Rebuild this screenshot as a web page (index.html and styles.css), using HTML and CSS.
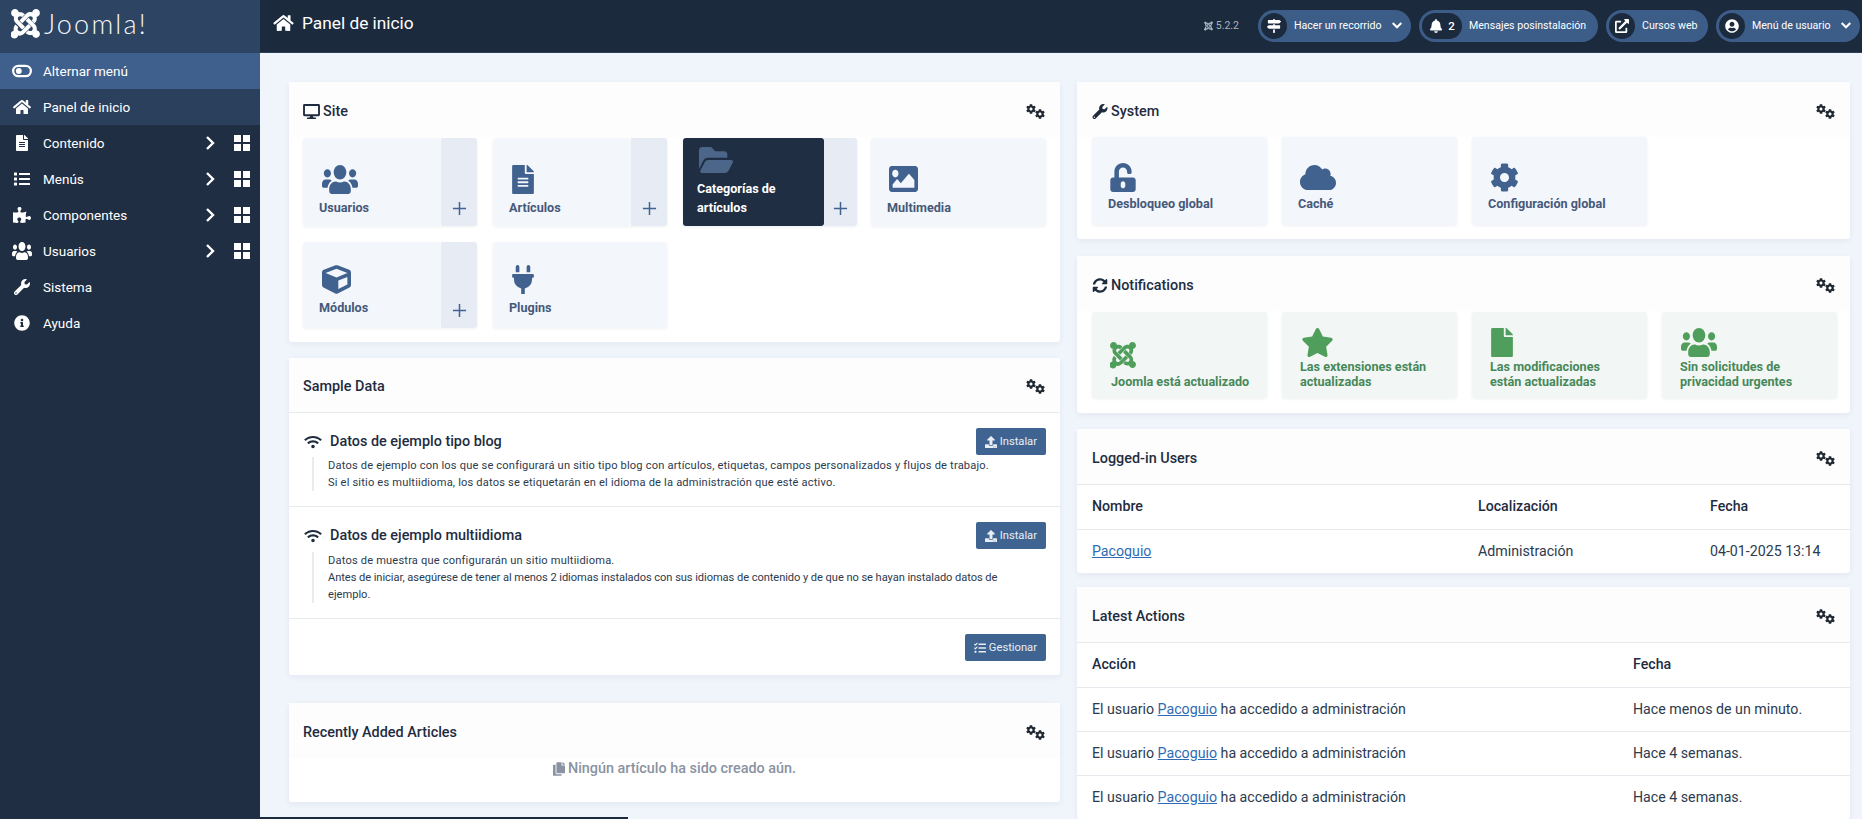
FILE: index.html
```html
<!DOCTYPE html>
<html lang="es">
<head>
<meta charset="utf-8">
<title>Panel de inicio</title>
<link rel="stylesheet" href="styles.css">
</head>
<body>
<svg class="sprite" xmlns="http://www.w3.org/2000/svg">
<symbol id="i-home" viewBox="0 0 576 512"><path d="M280.37 148.26L96 300.11V464a16 16 0 0 0 16 16l112.06-.29a16 16 0 0 0 15.92-16V368a16 16 0 0 1 16-16h64a16 16 0 0 1 16 16v95.64a16 16 0 0 0 16 16.05L464 480a16 16 0 0 0 16-16V300L295.67 148.26a12.19 12.19 0 0 0-15.3 0zM571.6 251.47L488 182.56V44.05a12 12 0 0 0-12-12h-56a12 12 0 0 0-12 12v72.61L318.47 43a48 48 0 0 0-61 0L4.34 251.47a12 12 0 0 0-1.6 16.9l25.5 31A12 12 0 0 0 45.15 301l235.22-193.74a12.19 12.19 0 0 1 15.3 0L530.9 301a12 12 0 0 0 16.9-1.6l25.5-31a12 12 0 0 0-1.7-16.93z"/></symbol>
<symbol id="i-file-alt" viewBox="0 0 384 512"><path d="M224 136V0H24C10.7 0 0 10.7 0 24v464c0 13.3 10.7 24 24 24h336c13.3 0 24-10.7 24-24V160H248c-13.2 0-24-10.8-24-24zm64 236c0 6.6-5.4 12-12 12H108c-6.6 0-12-5.4-12-12v-8c0-6.6 5.4-12 12-12h168c6.6 0 12 5.4 12 12v8zm0-64c0 6.6-5.4 12-12 12H108c-6.6 0-12-5.4-12-12v-8c0-6.6 5.4-12 12-12h168c6.6 0 12 5.4 12 12v8zm0-72v8c0 6.6-5.4 12-12 12H108c-6.6 0-12-5.4-12-12v-8c0-6.6 5.4-12 12-12h168c6.6 0 12 5.4 12 12zm96-114.1v6.1H256V0h6.1c6.4 0 12.5 2.5 17 7l97.9 98c4.5 4.5 7 10.6 7 16.9z"/></symbol>
<symbol id="i-file" viewBox="0 0 384 512"><path d="M224 136V0H24C10.7 0 0 10.7 0 24v464c0 13.3 10.7 24 24 24h336c13.3 0 24-10.7 24-24V160H248c-13.2 0-24-10.8-24-24zm160-14.1v6.1H256V0h6.1c6.4 0 12.5 2.5 17 7l97.9 98c4.5 4.5 7 10.6 7 16.9z"/></symbol>
<symbol id="i-list" viewBox="0 0 512 512"><path d="M80 368H16a16 16 0 0 0-16 16v64a16 16 0 0 0 16 16h64a16 16 0 0 0 16-16v-64a16 16 0 0 0-16-16zm0-320H16A16 16 0 0 0 0 64v64a16 16 0 0 0 16 16h64a16 16 0 0 0 16-16V64a16 16 0 0 0-16-16zm0 160H16a16 16 0 0 0-16 16v64a16 16 0 0 0 16 16h64a16 16 0 0 0 16-16v-64a16 16 0 0 0-16-16zm416 176H176a16 16 0 0 0-16 16v32a16 16 0 0 0 16 16h320a16 16 0 0 0 16-16v-32a16 16 0 0 0-16-16zm0-320H176a16 16 0 0 0-16 16v32a16 16 0 0 0 16 16h320a16 16 0 0 0 16-16V80a16 16 0 0 0-16-16zm0 160H176a16 16 0 0 0-16 16v32a16 16 0 0 0 16 16h320a16 16 0 0 0 16-16v-32a16 16 0 0 0-16-16z"/></symbol>
<symbol id="i-puzzle" viewBox="0 0 576 512"><path d="M519.442 288.651c-41.519 0-59.5 31.593-82.058 31.593C377.409 320.244 432 144 432 144s-196.288 80-196.288-3.297c0-35.827 36.288-46.25 36.288-85.985C272 19.216 243.885 0 210.539 0c-34.654 0-66.366 18.891-66.366 56.346 0 41.364 31.711 59.277 31.711 81.75C175.885 207.719 0 166.758 0 166.758v333.237s178.635 41.047 178.635-28.662c0-22.473-40-40.107-40-81.471 0-37.456 29.25-56.346 63.577-56.346 33.673 0 61.788 19.216 61.788 54.717 0 39.735-36.288 50.158-36.288 85.985 0 60.803 129.675 25.73 181.23 25.73 0 0-34.725-120.101 25.827-120.101 35.962 0 46.423 36.152 86.308 36.152C556.712 416 576 387.99 576 354.443c0-34.199-18.962-65.792-56.558-65.792z"/></symbol>
<symbol id="i-users" viewBox="0 32 640 448" preserveAspectRatio="none"><path d="M96 224c35.3 0 64-28.7 64-64s-28.7-64-64-64-64 28.7-64 64 28.7 64 64 64zm448 0c35.3 0 64-28.7 64-64s-28.7-64-64-64-64 28.7-64 64 28.7 64 64 64zm32 32h-64c-17.6 0-33.5 7.1-45.1 18.6 40.3 22.1 68.9 62 75.1 109.4h66c17.7 0 32-14.3 32-32v-32c0-35.3-28.7-64-64-64zm-256 0c61.9 0 112-50.1 112-112S381.9 32 320 32 208 82.1 208 144s50.1 112 112 112zm76.8 32h-8.3c-20.8 10-43.9 16-68.5 16s-47.6-6-68.5-16h-8.3C179.6 288 128 339.6 128 403.2V432c0 26.5 21.5 48 48 48h288c26.5 0 48-21.5 48-48v-28.8c0-63.6-51.6-115.2-115.2-115.2zm-223.7-13.4C161.5 263.1 145.6 256 128 256H64c-35.3 0-64 28.7-64 64v32c0 17.7 14.3 32 32 32h65.9c6.3-47.4 34.9-87.3 75.2-109.4z"/></symbol>
<symbol id="i-wrench" viewBox="0 0 512 512"><path d="M507.73 109.1c-2.24-9.03-13.54-12.09-20.12-5.51l-74.36 74.36-67.88-11.31-11.31-67.88 74.36-74.36c6.62-6.62 3.43-17.9-5.66-20.16-47.38-11.74-99.55.91-136.58 37.93-39.64 39.64-50.55 97.1-34.05 147.2L18.74 402.76c-24.99 24.99-24.99 65.51 0 90.5 24.99 24.99 65.51 24.99 90.5 0l213.21-213.21c50.12 16.71 107.47 5.68 147.37-34.22 37.07-37.07 49.7-89.32 37.91-136.73zM64 472c-13.25 0-24-10.75-24-24 0-13.26 10.75-24 24-24s24 10.74 24 24c0 13.25-10.75 24-24 24z"/></symbol>
<symbol id="i-info" viewBox="0 0 512 512"><path d="M256 8C119.043 8 8 119.083 8 256c0 136.997 111.043 248 248 248s248-111.003 248-248C504 119.083 392.957 8 256 8zm0 110c23.196 0 42 18.804 42 42s-18.804 42-42 42-42-18.804-42-42 18.804-42 42-42zm56 254c0 6.627-5.373 12-12 12h-88c-6.627 0-12-5.373-12-12v-24c0-6.627 5.373-12 12-12h12v-64h-12c-6.627 0-12-5.373-12-12v-24c0-6.627 5.373-12 12-12h64c6.627 0 12 5.373 12 12v100h12c6.627 0 12 5.373 12 12v24z"/></symbol>
<symbol id="i-desktop" viewBox="0 0 576 512"><path d="M528 0H48C21.5 0 0 21.5 0 48v320c0 26.5 21.5 48 48 48h192l-16 48h-72c-13.3 0-24 10.7-24 24s10.7 24 24 24h272c13.3 0 24-10.7 24-24s-10.7-24-24-24h-72l-16-48h192c26.5 0 48-21.5 48-48V48c0-26.5-21.5-48-48-48zm-16 352H64V64h448v288z"/></symbol>
<symbol id="i-cog" viewBox="0 0 512 512"><path d="M487.4 315.7l-42.6-24.6c4.3-23.2 4.3-47 0-70.2l42.6-24.6c4.9-2.8 7.1-8.6 5.5-14-11.1-35.6-30-67.8-54.7-94.6-3.8-4.1-10-5.1-14.8-2.3L380.8 110c-17.9-15.4-38.5-27.3-60.8-35.1V25.8c0-5.6-3.9-10.5-9.4-11.7-36.7-8.2-74.3-7.8-109.2 0-5.5 1.2-9.4 6.1-9.4 11.7V75c-22.2 7.9-42.8 19.8-60.8 35.1L88.7 85.5c-4.9-2.8-11-1.9-14.8 2.3-24.7 26.7-43.6 58.9-54.7 94.6-1.7 5.4.6 11.2 5.5 14L67.3 221c-4.3 23.2-4.3 47 0 70.2l-42.6 24.6c-4.9 2.8-7.1 8.6-5.5 14 11.1 35.6 30 67.8 54.7 94.6 3.8 4.1 10 5.1 14.8 2.3l42.6-24.6c17.9 15.4 38.5 27.3 60.8 35.1v49.2c0 5.6 3.9 10.5 9.4 11.7 36.7 8.2 74.3 7.8 109.2 0 5.5-1.2 9.4-6.1 9.4-11.7v-49.2c22.2-7.9 42.8-19.8 60.8-35.1l42.6 24.6c4.9 2.8 11 1.9 14.8-2.3 24.7-26.7 43.6-58.9 54.7-94.6 1.5-5.5-.7-11.3-5.6-14.1zM256 336c-44.1 0-80-35.9-80-80s35.9-80 80-80 80 35.9 80 80-35.9 80-80 80z"/></symbol>
<symbol id="i-gears" viewBox="0 0 19 15"><use href="#i-cog" x="0" y="0" width="10" height="10"/><use href="#i-cog" x="9" y="5" width="10" height="10"/></symbol>
<symbol id="i-folder" viewBox="0 64 576 384" preserveAspectRatio="none"><path d="M572.694 292.093L500.27 416.248A63.997 63.997 0 0 1 444.989 448H45.025c-18.523 0-30.064-20.093-20.731-36.093l72.424-124.155A64 64 0 0 1 152 256h399.964c18.523 0 30.064 20.093 20.73 36.093zM152 224h328v-48c0-26.51-21.49-48-48-48H272l-64-64H48C21.49 64 0 85.49 0 112v278.046l69.077-118.418C86.214 242.25 117.989 224 152 224z"/></symbol>
<symbol id="i-image" viewBox="0 64 512 384" preserveAspectRatio="none"><path d="M464 448H48c-26.51 0-48-21.49-48-48V112c0-26.51 21.49-48 48-48h416c26.51 0 48 21.49 48 48v288c0 26.51-21.49 48-48 48zM112 120c-30.928 0-56 25.072-56 56s25.072 56 56 56 56-25.072 56-56-25.072-56-56-56zM64 384h384V272l-87.515-87.515c-4.686-4.686-12.284-4.686-16.971 0L208 320l-55.515-55.515c-4.686-4.686-12.284-4.686-16.971 0L64 336v48z"/></symbol>
<symbol id="i-cube" viewBox="0 0 512 512"><path d="M239.1 6.3l-208 78c-18.7 7-31.1 25-31.1 45v225.1c0 18.2 10.3 34.8 26.5 42.9l208 104c13.5 6.8 29.4 6.8 42.9 0l208-104c16.3-8.1 26.5-24.8 26.5-42.9V129.3c0-20-12.4-37.9-31.1-44.9l-208-78C262 2.2 250 2.2 239.1 6.3zM256 68.4l192 72v1.1l-192 78-192-78v-1.1l192-72zm32 356V275.5l160-65v133.9l-160 80z"/></symbol>
<symbol id="i-plug" viewBox="0 0 384 512"><path d="M320,32a32,32,0,0,0-64,0v96h64Zm48,128H16A16,16,0,0,0,0,176v32a16,16,0,0,0,16,16H32v32A160.07,160.07,0,0,0,160,412.8V512h64V412.8A160.07,160.07,0,0,0,352,256V224h16a16,16,0,0,0,16-16V176A16,16,0,0,0,368,160ZM128,32a32,32,0,0,0-64,0v96h64Z"/></symbol>
<symbol id="i-unlock" viewBox="0 0 448 512"><path d="M400 256H152V152.9c0-39.6 31.7-72.5 71.3-72.9 40-.4 72.7 32.1 72.7 72v16c0 13.3 10.7 24 24 24h32c13.3 0 24-10.7 24-24v-16C376 68 307.5-.3 223.5 0 139.5.3 72 69.5 72 153.5V256H48c-26.5 0-48 21.5-48 48v160c0 26.5 21.5 48 48 48h352c26.5 0 48-21.5 48-48V304c0-26.5-21.5-48-48-48zM264 408c0 22.1-17.9 40-40 40s-40-17.9-40-40v-48c0-22.1 17.9-40 40-40s40 17.9 40 40v48z"/></symbol>
<symbol id="i-cloud" viewBox="0 0 640 512"><path d="M537.6 226.6c4.1-10.7 6.4-22.4 6.4-34.6 0-53-43-96-96-96-19.7 0-38.1 6-53.3 16.2C367 64.2 315.3 32 256 32c-88.4 0-160 71.6-160 160 0 2.7.1 5.4.2 8.1C40.2 219.8 0 273.2 0 336c0 79.5 64.5 144 144 144h368c70.7 0 128-57.3 128-128 0-61.9-44-113.6-102.4-125.4z"/></symbol>
<symbol id="i-sync" viewBox="0 0 512 512"><path d="M370.72 133.28C339.458 104.008 298.888 87.962 255.848 88c-77.458.068-144.328 53.178-162.791 126.85-1.344 5.363-6.122 9.15-11.651 9.15H24.103c-7.498 0-13.194-6.807-11.807-14.176C33.933 94.924 134.813 8 256 8c66.448 0 126.791 26.136 171.315 68.685L463.03 40.97C478.149 25.851 504 36.559 504 57.941V192c0 13.255-10.745 24-24 24H345.941c-21.382 0-32.09-25.851-16.971-40.971l41.75-41.749zM32 296h134.059c21.382 0 32.09 25.851 16.971 40.971l-41.75 41.75c31.262 29.273 71.835 45.319 114.876 45.28 77.418-.07 144.315-53.144 162.787-126.849 1.344-5.363 6.122-9.15 11.651-9.15h57.304c7.498 0 13.194 6.807 11.807 14.176C478.067 417.076 377.187 504 256 504c-66.448 0-126.791-26.136-171.315-68.685L48.97 471.03C33.851 486.149 8 475.441 8 454.059V320c0-13.255 10.745-24 24-24z"/></symbol>
<symbol id="i-star" viewBox="0 0 576 512"><path d="M259.3 17.8L194 150.2 47.9 171.5c-26.2 3.8-36.7 36.1-17.7 54.6l105.7 103-25 145.5c-4.5 26.3 23.2 46 46.4 33.7L288 439.6l130.7 68.7c23.2 12.2 50.9-7.4 46.4-33.7l-25-145.5 105.7-103c19-18.5 8.5-50.8-17.7-54.6L382 150.2 316.7 17.8c-11.7-23.6-45.6-23.9-57.4 0z"/></symbol>
<symbol id="i-wifi" viewBox="0 0 640 512"><path d="M634.91 154.88C457.74-8.99 182.19-8.93 5.09 154.88c-6.66 6.16-6.79 16.59-.35 22.98l34.24 33.97c6.14 6.1 16.02 6.23 22.4.38 145.92-133.68 371.3-133.71 517.25 0 6.38 5.85 16.26 5.71 22.4-.38l34.24-33.97c6.43-6.39 6.3-16.82-.36-22.98zM320 352c-35.35 0-64 28.65-64 64s28.65 64 64 64 64-28.65 64-64-28.65-64-64-64zm202.67-83.59c-115.26-101.93-290.21-101.82-405.34 0-6.9 6.1-7.12 16.69-.57 23.15l34.44 33.99c6 5.92 15.66 6.32 22.05.8 83.95-72.57 209.74-72.41 293.49 0 6.39 5.52 16.05 5.13 22.05-.8l34.44-33.99c6.56-6.46 6.33-17.06-.56-23.15z"/></symbol>
<symbol id="i-upload" viewBox="0 0 512 512"><path d="M296 384h-80c-13.3 0-24-10.7-24-24V192h-87.7c-17.8 0-26.7-21.5-14.1-34.1L242.3 5.7c7.5-7.5 19.8-7.5 27.3 0l152.2 152.2c12.6 12.6 3.7 34.1-14.1 34.1H320v168c0 13.3-10.7 24-24 24zm216-8v112c0 13.3-10.7 24-24 24H24c-13.3 0-24-10.7-24-24V376c0-13.3 10.7-24 24-24h136v8c0 30.9 25.1 56 56 56h80c30.9 0 56-25.1 56-56v-8h136c13.3 0 24 10.7 24 24zm-124 88c0-11-9-20-20-20s-20 9-20 20 9 20 20 20 20-9 20-20zm64 0c0-11-9-20-20-20s-20 9-20 20 9 20 20 20 20-9 20-20z"/></symbol>
<symbol id="i-tasks" viewBox="0 0 512 512"><path d="M139.61 35.5a12 12 0 0 0-17 0L58.93 98.81l-22.7-22.12a12 12 0 0 0-17 0L3.53 92.41a12 12 0 0 0 0 17l47.59 47.4a12.78 12.78 0 0 0 17.61 0l15.59-15.62L156.52 69a12.09 12.09 0 0 0 .09-17zm0 159.19a12 12 0 0 0-17 0l-63.68 63.72-22.7-22.1a12 12 0 0 0-17 0L3.53 252a12 12 0 0 0 0 17L51 316.5a12.77 12.77 0 0 0 17.6 0l15.7-15.69 72.2-72.22a12 12 0 0 0 .09-16.9zM64 368c-26.49 0-48.59 21.5-48.59 48S37.53 464 64 464a48 48 0 0 0 0-96zm432 16H208a16 16 0 0 0-16 16v32a16 16 0 0 0 16 16h288a16 16 0 0 0 16-16v-32a16 16 0 0 0-16-16zm0-320H208a16 16 0 0 0-16 16v32a16 16 0 0 0 16 16h288a16 16 0 0 0 16-16V80a16 16 0 0 0-16-16zm0 160H208a16 16 0 0 0-16 16v32a16 16 0 0 0 16 16h288a16 16 0 0 0 16-16v-32a16 16 0 0 0-16-16z"/></symbol>
<symbol id="i-copy" viewBox="0 0 448 512"><path d="M320 448v40c0 13.255-10.745 24-24 24H24c-13.255 0-24-10.745-24-24V120c0-13.255 10.745-24 24-24h72v296c0 30.879 25.121 56 56 56h168zm0-344V0H152c-13.255 0-24 10.745-24 24v368c0 13.255 10.745 24 24 24h272c13.255 0 24-10.745 24-24V128H344c-13.2 0-24-10.8-24-24zm120.971-31.029L375.029 7.029A24 24 0 0 0 358.059 0H352v96h96v-6.059a24 24 0 0 0-7.029-16.97z"/></symbol>
<symbol id="i-user" viewBox="0 0 496 512"><path d="M248 8C111 8 0 119 0 256s111 248 248 248 248-111 248-248S385 8 248 8zm0 96c48.6 0 88 39.4 88 88s-39.4 88-88 88-88-39.4-88-88 39.4-88 88-88zm0 344c-58.7 0-111.3-26.6-146.5-68.2 18.8-35.4 55.6-59.8 98.5-59.8 2.4 0 4.8.4 7.1 1.1 13 4.2 26.6 6.9 40.9 6.9 14.3 0 28-2.7 40.9-6.9 2.3-.7 4.7-1.1 7.1-1.1 42.9 0 79.7 24.4 98.5 59.8C359.3 421.4 306.7 448 248 448z"/></symbol>
<symbol id="i-external" viewBox="0 0 512 512"><path d="M432,320H400a16,16,0,0,0-16,16V448H64V128H208a16,16,0,0,0,16-16V80a16,16,0,0,0-16-16H48A48,48,0,0,0,0,112V464a48,48,0,0,0,48,48H400a48,48,0,0,0,48-48V336A16,16,0,0,0,432,320ZM488,0h-128c-21.37,0-32.05,25.91-17,41l35.73,35.73L135,320.37a24,24,0,0,0,0,34L157.67,377a24,24,0,0,0,34,0L435.28,133.32,471,169c15,15,41,4.5,41-17V24A24,24,0,0,0,488,0Z"/></symbol>
<symbol id="i-bell" viewBox="0 0 448 512"><path d="M224 512c35.32 0 63.97-28.65 63.97-64H160.03c0 35.35 28.65 64 63.97 64zm215.39-149.71c-19.32-20.76-55.47-51.99-55.47-154.29 0-77.7-54.48-139.9-127.94-155.16V32c0-17.67-14.32-32-31.98-32s-31.98 14.33-31.98 32v20.84C118.56 68.1 64.08 130.3 64.08 208c0 102.3-36.15 133.53-55.47 154.29-6 6.45-8.66 14.16-8.61 21.71.11 16.4 12.98 32 32.1 32h383.8c19.12 0 32-15.6 32.1-32 .05-7.55-2.61-15.27-8.61-21.71z"/></symbol>
<symbol id="i-signs" viewBox="0 0 512 512"><path d="M507.31 84.69L464 41.37c-6-6-14.14-9.37-22.63-9.37H288V16c0-8.84-7.16-16-16-16h-32c-8.84 0-16 7.16-16 16v16H56c-13.25 0-24 10.75-24 24v80c0 13.25 10.75 24 24 24h385.37c8.49 0 16.62-3.37 22.63-9.37l43.31-43.31c6.25-6.26 6.25-16.38 0-22.63zM224 496c0 8.84 7.16 16 16 16h32c8.84 0 16-7.16 16-16V384h-64v112zm232-272H288v-32h-64v32H70.63c-8.49 0-16.62 3.37-22.63 9.37L4.69 276.69c-6.25 6.25-6.25 16.38 0 22.63L48 342.63c6 6 14.14 9.37 22.63 9.37H456c13.25 0 24-10.75 24-24v-80c0-13.25-10.75-24-24-24z"/></symbol>
<symbol id="i-joomla" viewBox="0 0 448 512"><path d="M.6 92.1C.6 58.8 27.4 32 60.4 32c30 0 54.5 21.9 59.2 50.2 32.6-7.6 67.1.6 96.5 30l-44.3 44.3c-20.5-20.5-42.6-16.3-55.4-3.5-14.3 14.3-14.3 37.9 0 52.2l99.5 99.5-44 44.3c-87.7-87.2-49.7-49.7-99.8-99.7-26.8-26.5-35-64.8-24.8-98.9C20.4 144.6.6 120.7.6 92.1zm129.5 116.4l44.3 44.3c10-10 89.7-89.7 99.7-99.8 14.3-14.3 37.6-14.3 51.9 0 12.8 12.8 17 35-3.5 55.4l44 44.3c31.2-31.2 38.5-67.6 28.9-101.2 29.2-4.1 51.9-29.2 51.9-59.5 0-33.2-26.8-60.1-59.8-60.1-30.3 0-55.4 22.5-59.5 51.6-33.8-9.9-71.7-1.5-98.3 25.1-18.3 19.1-71.1 71.5-99.6 99.9zm266.3 152.2c8.2-32.7-.9-68.5-26.3-93.9-11.8-12-97-97.2-99.5-99.7l-44.3 44.3 99.5 99.7c14.3 14.3 14.3 37.6 0 51.9-12.8 12.8-35 17-55.4-3.5l-44 44.3c27.6 30.2 68 38.8 102.7 28 5.5 27.4 29.7 48.1 58.9 48.1 33 0 59.8-26.8 59.8-60.1 0-30.2-22.5-55-51.4-58.8zm-84.3-53.1l-44-44.3c-87.2 87.2-49.7 49.7-99.8 99.7-20.5 20.5-42.6 16.3-55.4 3.5-14.3-14.3-14.3-37.6 0-51.9l-44.3-44.3c-26.6 26.6-35 64.8-25.1 98.8-29.2 4.1-51.9 29.2-51.9 59.5 0 33.2 26.8 60.1 59.8 60.1 28.6 0 52.5-19.9 58.6-46.7 30.5 7.1 67.1-.9 95.3-29.2 32.5-32.4 34.2-34.2 106.8-106.2z"/></symbol>
<symbol id="i-chev" viewBox="0 0 10 16"><path d="M2 2l6 6-6 6" fill="none" stroke="currentColor" stroke-width="2.4"/></symbol>
<symbol id="i-down" viewBox="0 0 14 10"><path d="M2 2l5 5 5-5" fill="none" stroke="currentColor" stroke-width="2.4"/></symbol>
<symbol id="i-grid" viewBox="0 0 16 16"><path d="M0 0h7v7H0zM9 0h7v7H9zM0 9h7v7H0zM9 9h7v7H9z"/></symbol>
<symbol id="i-plus" viewBox="0 0 16 16"><path d="M8 1v14M1 8h14" fill="none" stroke="currentColor" stroke-width="1.6"/></symbol>
<symbol id="i-toggle" viewBox="0 0 22 14"><path fill-rule="evenodd" d="M7 0h8a7 7 0 0 1 0 14H7A7 7 0 0 1 7 0zm0 2.5a4.5 4.5 0 0 0 0 9h8a4.5 4.5 0 0 0 0-9z"/><circle cx="7.5" cy="7" r="3.2"/></symbol>
</svg>

<div class="app">
  <aside class="sidebar">
    <div class="brand">
      <svg class="brand-mark"><use href="#i-joomla"/></svg>
      <span class="brand-word">Joomla!</span>
    </div>
    <nav class="nav">
      <a class="nav-item toggle"><svg class="nav-ic"><use href="#i-toggle"/></svg><span class="nav-label">Alternar menú</span></a>
      <a class="nav-item active"><svg class="nav-ic"><use href="#i-home"/></svg><span class="nav-label">Panel de inicio</span></a>
      <a class="nav-item"><svg class="nav-ic"><use href="#i-file-alt"/></svg><span class="nav-label">Contenido</span><svg class="nav-chev"><use href="#i-chev"/></svg><svg class="nav-grid"><use href="#i-grid"/></svg></a>
      <a class="nav-item"><svg class="nav-ic"><use href="#i-list"/></svg><span class="nav-label">Menús</span><svg class="nav-chev"><use href="#i-chev"/></svg><svg class="nav-grid"><use href="#i-grid"/></svg></a>
      <a class="nav-item"><svg class="nav-ic"><use href="#i-puzzle"/></svg><span class="nav-label">Componentes</span><svg class="nav-chev"><use href="#i-chev"/></svg><svg class="nav-grid"><use href="#i-grid"/></svg></a>
      <a class="nav-item"><svg class="nav-ic tall"><use href="#i-users"/></svg><span class="nav-label">Usuarios</span><svg class="nav-chev"><use href="#i-chev"/></svg><svg class="nav-grid"><use href="#i-grid"/></svg></a>
      <a class="nav-item"><svg class="nav-ic"><use href="#i-wrench"/></svg><span class="nav-label">Sistema</span></a>
      <a class="nav-item"><svg class="nav-ic"><use href="#i-info"/></svg><span class="nav-label">Ayuda</span></a>
    </nav>
  </aside>

  <div class="page">
    <header class="topbar">
      <svg class="top-home"><use href="#i-home"/></svg>
      <h1 class="top-title">Panel de inicio</h1>
      <div class="top-tools">
        <span class="version"><svg class="version-ic"><use href="#i-joomla"/></svg>5.2.2</span>
        <a class="pill pill-tour"><span class="pill-circle"><svg class="pill-ic"><use href="#i-signs"/></svg></span><span class="pill-text">Hacer un recorrido</span><svg class="pill-down"><use href="#i-down"/></svg></a>
        <a class="pill pill-post"><span class="pill-circle wide"><svg class="pill-ic"><use href="#i-bell"/></svg><b class="count">2</b></span><span class="pill-text">Mensajes posinstalación</span></a>
        <a class="pill pill-web"><span class="pill-circle"><svg class="pill-ic"><use href="#i-external"/></svg></span><span class="pill-text">Cursos web</span></a>
        <a class="pill pill-user"><span class="pill-circle"><svg class="pill-ic"><use href="#i-user"/></svg></span><span class="pill-text">Menú de usuario</span><svg class="pill-down"><use href="#i-down"/></svg></a>
      </div>
    </header>

    <main class="content">
      <div class="col col-left">
        <section class="card card-site">
          <div class="card-head"><h2 class="card-title"><svg class="title-ic wide-ic"><use href="#i-desktop"/></svg>Site</h2><svg class="gears"><use href="#i-gears"/></svg></div>
          <div class="tiles tiles-site">
            <div class="tile-wrap"><a class="tile"><svg class="tile-ic w36"><use href="#i-users"/></svg><span class="tile-label">Usuarios</span></a><a class="tile-add"><svg class="plus"><use href="#i-plus"/></svg></a></div>
            <div class="tile-wrap"><a class="tile"><svg class="tile-ic w22"><use href="#i-file-alt"/></svg><span class="tile-label">Artículos</span></a><a class="tile-add"><svg class="plus"><use href="#i-plus"/></svg></a></div>
            <div class="tile-wrap"><a class="tile dark"><svg class="tile-ic folder"><use href="#i-folder"/></svg><span class="tile-label">Categorías de artículos</span></a><a class="tile-add narrow"><svg class="plus"><use href="#i-plus"/></svg></a></div>
            <div class="tile-wrap last"><a class="tile"><svg class="tile-ic picture"><use href="#i-image"/></svg><span class="tile-label">Multimedia</span></a></div>
            <div class="tile-wrap row2"><a class="tile"><svg class="tile-ic w29"><use href="#i-cube"/></svg><span class="tile-label">Módulos</span></a><a class="tile-add"><svg class="plus"><use href="#i-plus"/></svg></a></div>
            <div class="tile-wrap row2"><a class="tile"><svg class="tile-ic w22"><use href="#i-plug"/></svg><span class="tile-label">Plugins</span></a></div>
          </div>
        </section>

        <section class="card card-sample">
          <div class="card-head ruled"><h2 class="card-title">Sample Data</h2><svg class="gears"><use href="#i-gears"/></svg></div>
          <div class="sample sample-1">
            <div class="sample-top"><h3 class="sample-title"><svg class="wifi"><use href="#i-wifi"/></svg>Datos de ejemplo tipo blog</h3><a class="btn"><svg class="btn-ic"><use href="#i-upload"/></svg>Instalar</a></div>
            <div class="sample-desc"><span class="loose">Datos de ejemplo con los que se configurará un sitio tipo blog con artículos, etiquetas, campos personalizados y flujos de trabajo.</span><br><span class="loose">Si el sitio es multiidioma, los datos se etiquetarán en el idioma de la administración que esté activo.</span></div>
          </div>
          <div class="sample sample-2">
            <div class="sample-top"><h3 class="sample-title"><svg class="wifi"><use href="#i-wifi"/></svg>Datos de ejemplo multiidioma</h3><a class="btn"><svg class="btn-ic"><use href="#i-upload"/></svg>Instalar</a></div>
            <div class="sample-desc"><span class="loose">Datos de muestra que configurarán un sitio multiidioma.</span><br><span class="tight">Antes de iniciar, asegúrese de tener al menos 2 idiomas instalados con sus idiomas de contenido y de que no se hayan instalado datos de</span><br>ejemplo.</div>
          </div>
          <div class="sample-foot"><a class="btn"><svg class="btn-ic"><use href="#i-tasks"/></svg>Gestionar</a></div>
        </section>

        <section class="card card-recent">
          <div class="card-head"><h2 class="card-title">Recently Added Articles</h2><svg class="gears"><use href="#i-gears"/></svg></div>
          <p class="empty"><svg class="empty-ic"><use href="#i-copy"/></svg>Ningún artículo ha sido creado aún.</p>
        </section>
      </div>

      <div class="col col-right">
        <section class="card card-system">
          <div class="card-head"><h2 class="card-title"><svg class="title-ic"><use href="#i-wrench"/></svg>System</h2><svg class="gears"><use href="#i-gears"/></svg></div>
          <div class="tiles tiles-four">
            <a class="tile solo"><svg class="tile-ic w26"><use href="#i-unlock"/></svg><span class="tile-label">Desbloqueo global</span></a>
            <a class="tile solo"><svg class="tile-ic w36"><use href="#i-cloud"/></svg><span class="tile-label">Caché</span></a>
            <a class="tile solo"><svg class="tile-ic w29"><use href="#i-cog"/></svg><span class="tile-label">Configuración global</span></a>
          </div>
        </section>

        <section class="card card-notif">
          <div class="card-head"><h2 class="card-title"><svg class="title-ic"><use href="#i-sync"/></svg>Notifications</h2><svg class="gears"><use href="#i-gears"/></svg></div>
          <div class="tiles tiles-four tiles-notif">
            <a class="tile solo ok roomy"><svg class="tile-ic wj"><use href="#i-joomla"/></svg><span class="tile-label">Joomla está actualizado</span></a>
            <a class="tile solo ok"><svg class="tile-ic w33"><use href="#i-star"/></svg><span class="tile-label">Las extensiones están actualizadas</span></a>
            <a class="tile solo ok"><svg class="tile-ic w22"><use href="#i-file"/></svg><span class="tile-label">Las modificaciones están actualizadas</span></a>
            <a class="tile solo ok"><svg class="tile-ic w36"><use href="#i-users"/></svg><span class="tile-label">Sin solicitudes de privacidad urgentes</span></a>
          </div>
        </section>

        <section class="card card-logged">
          <div class="card-head ruled tall-head"><h2 class="card-title">Logged-in Users</h2><svg class="gears"><use href="#i-gears"/></svg></div>
          <table class="table table-logged">
            <thead><tr><th class="c-name">Nombre</th><th class="c-loc">Localización</th><th>Fecha</th></tr></thead>
            <tbody><tr><td><a class="link">Pacoguio</a></td><td>Administración</td><td>04-01-2025 13:14</td></tr></tbody>
          </table>
        </section>

        <section class="card card-latest">
          <div class="card-head ruled tall-head"><h2 class="card-title">Latest Actions</h2><svg class="gears"><use href="#i-gears"/></svg></div>
          <table class="table table-latest">
            <thead><tr><th class="c-action">Acción</th><th>Fecha</th></tr></thead>
            <tbody>
              <tr><td>El usuario <a class="link">Pacoguio</a> ha accedido a administración</td><td>Hace menos de un minuto.</td></tr>
              <tr><td>El usuario <a class="link">Pacoguio</a> ha accedido a administración</td><td>Hace 4 semanas.</td></tr>
              <tr><td>El usuario <a class="link">Pacoguio</a> ha accedido a administración</td><td>Hace 4 semanas.</td></tr>
            </tbody>
          </table>
        </section>
      </div>
    </main>
    <div class="bottom-bar"></div>
  </div>
</div>
</body>
</html>
```

FILE: styles.css
```css
* { box-sizing: border-box; }
html, body { margin: 0; height: 100%; overflow: hidden; }
body { font-family: Roboto, "Liberation Sans", sans-serif; font-size: 14px; color: #22304a; background: #f0f4fb; }
a { color: inherit; text-decoration: none; }
h1, h2, h3, p { margin: 0; }
svg { fill: currentColor; flex: none; display: block; }
.sprite { display: none; }

.app { display: flex; width: 1862px; height: 819px; overflow: hidden; }

/* Sidebar */
.sidebar { width: 260px; flex: none; background: #1f2e42; color: #fff; }
.brand { height: 53px; display: flex; align-items: center; gap: 4px; padding: 0 0 6px 11px; background: #2d4563; }
.brand-mark { width: 29px; height: 33px; }
.brand-word { font-family: Lato, sans-serif; font-weight: 300; font-size: 27px; letter-spacing: 2.2px; color: #f4f6f9; }
.nav { display: flex; flex-direction: column; }
.nav-item { height: 36px; display: flex; align-items: center; color: #fff; font-size: 13.5px; padding-left: 12px; }
.nav-item.toggle { background: #3f5f8c; }
.nav-item.active { background: #2b405d; }
.nav-ic { width: 20px; height: 16px; margin-right: 11px; }
.nav-ic.tall { height: 18px; }
.nav-label { flex: 1; }
.nav-chev { width: 10px; height: 16px; margin-right: 19px; }
.nav-grid { width: 16px; height: 16px; margin-right: 10px; }

/* Top bar */
.page { flex: 1; min-width: 0; position: relative; }
.topbar { height: 53px; display: flex; align-items: center; background: #1c2a3e; color: #fff; border-bottom: 1px solid #2e4157; padding: 0 2px 1px 13px; }
.top-home { width: 21px; height: 18px; margin: 0 8px 6px 0; }
.top-title { font-size: 17.3px; font-weight: 400; flex: 1; margin-bottom: 6px; }
.top-tools { display: flex; align-items: center; gap: 8px; }
.version { display: flex; align-items: center; gap: 3px; font-size: 10.5px; color: #aab4c2; margin-right: 11px; }
.version-ic { width: 9px; height: 10px; }
.pill { height: 32px; display: flex; align-items: center; background: #3d5d89; border-radius: 16px; padding: 0 8px 0 3px; color: #fff; font-size: 10.6px; gap: 7px; }
.pill-tour { width: 153px; }
.pill-post { width: 179px; }
.pill-web { width: 102px; }
.pill-user { width: 144px; }
.pill-circle { width: 26px; height: 26px; border-radius: 13px; background: #1c2a3e; display: flex; align-items: center; justify-content: center; }
.pill-circle.wide { width: 40px; gap: 5px; }
.pill-ic { width: 14px; height: 14px; }
.count { font-size: 11.5px; font-weight: 500; }
.pill-text { flex: 1; white-space: nowrap; }
.pill-down { width: 12px; height: 9px; }

/* Content */
.content { height: 766px; display: flex; gap: 17px; padding: 29px 12px 0 29px; overflow: hidden; }
.col { display: flex; flex-direction: column; }
.col-left { width: 771px; }
.col-right { width: 773px; }
.card { flex: none; background: #fff; border-radius: 3px; box-shadow: 0 2px 6px rgba(40, 60, 100, .06); }
.card-head { height: 55px; display: flex; align-items: center; justify-content: space-between; padding: 3px 15px 0 14px; background: #fdfdfe; }
.col-right .card-head { padding-left: 15px; }
.card-head.ruled { border-bottom: 1px solid #e6e9ee; }
.card-head.tall-head { height: 56px; padding-top: 4px; }
.card-title { display: flex; align-items: center; gap: 3px; font-size: 14.4px; font-weight: 500; color: #1f2c3f; }
.title-ic { width: 16px; height: 15px; }
.title-ic.wide-ic { width: 17px; height: 15px; }
.gears { width: 19px; height: 15px; color: #1f2730; }

.card-site { height: 260px; margin-bottom: 16px; }
.card-sample { height: 317px; margin-bottom: 28px; }
.card-recent { height: 99px; }
.card-system { height: 157px; margin-bottom: 17px; }
.card-notif { height: 157px; margin-bottom: 16px; }
.card-logged { height: 144px; margin-bottom: 14px; }
.card-latest { flex: 1; min-height: 0; }

/* Tiles */
.tiles { display: grid; padding: 0 15px; }
.tiles-site { grid-template-columns: 190px 190px 188px 175px; grid-template-rows: 88px 86px; row-gap: 16px; padding: 1px 14px 0; }
.tiles-four { grid-template-columns: repeat(4, 175px); grid-auto-rows: 88px; column-gap: 15px; }
.tiles-notif { grid-auto-rows: 86px; padding-top: 1px; }
.tile-wrap { display: flex; width: 174px; box-shadow: 0 1px 3px rgba(40, 60, 100, .08); border-radius: 3px; }
.tile-wrap.last { width: 175px; }
.tile { flex: 1; min-width: 0; background: #f3f6fb; color: #45597a; display: flex; flex-direction: column; justify-content: flex-end; padding: 0 14px 9px 16px; font-weight: 700; font-size: 12.6px; line-height: 19px; border-radius: 3px; }
.row2 .tile { padding-bottom: 11px; }
.tile.solo { box-shadow: 0 1px 3px rgba(40, 60, 100, .08); padding: 0 12px 12px 16px; }
.tile.dark { background: #1f2e42; color: #fff; padding-left: 14px; }
.tile.dark .tile-ic { color: #4b6688; }
.tile-ic { color: #41628f; height: 29px; margin: 0 0 4px 3px; }
.tile.solo .tile-ic { margin: 0 0 2px 2px; }
.tile-label { display: block; }
.tile-add { width: 36px; flex: none; background: #e6ebf4; color: #41628f; display: flex; align-items: flex-end; justify-content: center; padding-bottom: 10px; border-radius: 0 3px 3px 0; }
.tile-add.narrow { width: 33px; }
.plus { width: 15px; height: 15px; }
.w22 { width: 22px; } .w26 { width: 26px; } .w29 { width: 29px; } .w33 { width: 33px; } .w36 { width: 36px; }
.tile .folder { width: 34px; height: 26px; margin: 0 0 6px 2px; }
.tile .picture { width: 29px; height: 26px; margin: 0 0 6px 2px; }
.tile.solo.ok { background: #f2f6f4; color: #47885a; line-height: 15px; padding: 0 20px 9px 18px; }
.tile.solo.roomy { padding-right: 8px; }
.tile.solo.ok .tile-ic { color: #4f9e5b; margin: 0 0 2px 1px; }
.tile.solo.ok .wj { width: 26px; height: 30px; margin: 0 0 4px 0; }
.tile.solo.ok .wj + .tile-label { margin-left: 1px; }

/* Sample data */
.sample { padding: 15px 14px 0 15px; border-bottom: 1px solid #e6e9ee; }
.sample-1 { height: 94px; }
.sample-2 { height: 112px; }
.sample-top { display: flex; justify-content: space-between; height: 27px; align-items: center; }
.sample-title { display: flex; align-items: center; gap: 8px; font-size: 14.4px; font-weight: 500; color: #1f2c3f; }
.wifi { width: 18px; height: 14px; }
.sample-desc { margin: 2px 0 0 8px; padding-left: 14px; border-left: 2px solid #e8ebf0; font-size: 11.1px; line-height: 17px; color: #2c3a4e; }
.sample-2 .sample-desc { margin-top: 3px; }
.loose { letter-spacing: .18px; }
.tight { letter-spacing: -.06px; }
.sample-foot { display: flex; justify-content: flex-end; padding: 15px 14px 0 0; }
.btn { height: 27px; display: flex; align-items: center; justify-content: center; gap: 3px; padding: 0 9px; background: #3f6491; color: #e8eef6; font-size: 11.2px; border-radius: 2px; }
.btn-ic { width: 12px; height: 12px; }
.empty { display: flex; justify-content: center; align-items: center; gap: 3px; padding-top: 2px; font-size: 14.4px; font-weight: 500; color: #8a93a1; }
.empty-ic { width: 12px; height: 14px; }

/* Tables */
.table { width: 100%; border-collapse: collapse; font-size: 14.2px; color: #2c3a4e; }
.table th { height: 44px; padding: 0 0 2px 15px; font-weight: 500; text-align: left; color: #1f2c3f; border-bottom: 1px solid #e6e9ee; }
.table td { height: 44px; padding: 0 0 0 15px; border-bottom: 1px solid #e6e9ee; }
.table-logged tbody td { border-bottom: 0; }
.c-name { width: 386px; }
.c-loc { width: 232px; }
.c-action { width: 541px; }
.link { color: #2f6bb3; text-decoration: underline; }

.bottom-bar { position: absolute; left: 0; bottom: 0; width: 368px; height: 2px; background: #1c2a3e; }
```
